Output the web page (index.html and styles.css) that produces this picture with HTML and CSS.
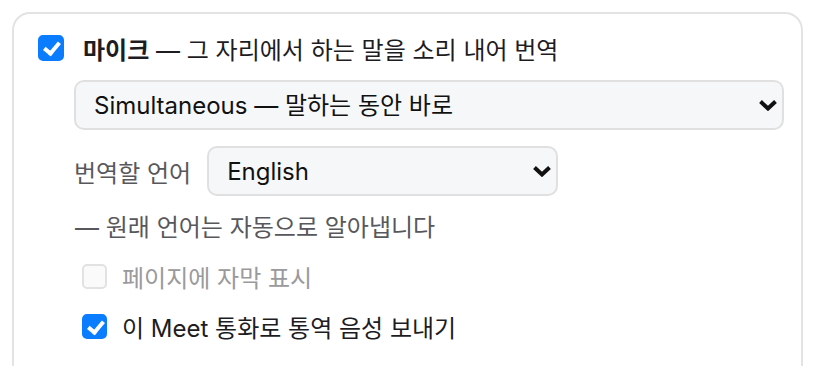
FILE: index.html
```html
<!DOCTYPE html>
<html lang="ko">
<head>
<meta charset="utf-8">
<link rel="stylesheet" href="styles.css">
</head>
<body>
<section class="card">
  <label class="row-main">
    <input type="checkbox" class="check" checked>
    <span class="main-text"><b>마이크</b> — 그 자리에서 하는 말을 소리 내어 번역</span>
  </label>
  <div class="sub">
    <div class="select-wrap select-mode">
      <select class="select">
        <option>Simultaneous — 말하는 동안 바로</option>
      </select>
      <svg class="chev" width="20" height="12" viewBox="0 0 20 12"><path d="M2.5 2.5 L10 9.5 L17.5 2.5" fill="none" stroke="#111" stroke-width="4" stroke-linejoin="miter"/></svg>
    </div>
    <div class="lang-row">
      <span class="muted">번역할 언어</span>
      <div class="select-wrap select-lang">
        <select class="select">
          <option>English</option>
        </select>
        <svg class="chev" width="20" height="12" viewBox="0 0 20 12"><path d="M2.5 2.5 L10 9.5 L17.5 2.5" fill="none" stroke="#111" stroke-width="4" stroke-linejoin="miter"/></svg>
      </div>
    </div>
    <p class="muted hint">— 원래 언어는 자동으로 알아냅니다</p>
    <label class="row-opt disabled">
      <input type="checkbox" class="check small" disabled>
      <span>페이지에 자막 표시</span>
    </label>
    <label class="row-opt second">
      <input type="checkbox" class="check small" checked>
      <span>이 Meet 통화로 통역 음성 보내기</span>
    </label>
  </div>
</section>
</body>
</html>
```
FILE: styles.css
```css
html, body {
  margin: 0;
  padding: 0;
  background: #ffffff;
}
body {
  font-family: Inter, "Noto Sans CJK KR", sans-serif;
  font-size: 24px;
  color: #1d1d1f;
  overflow: hidden;
}
.card {
  box-sizing: border-box;
  margin: 12px 0 0 12px;
  width: 791px;
  min-height: 420px;
  border: 2px solid #e3e3e3;
  border-radius: 18px;
  padding: 20px 17px 0 24px;
}
.row-main {
  display: flex;
  align-items: center;
  height: 28px;
  gap: 19px;
}
.main-text b {
  font-weight: 700;
}
.check {
  appearance: none;
  -webkit-appearance: none;
  margin: 0;
  flex: none;
  width: 26px;
  height: 26px;
  border-radius: 5px;
  border: 2px solid #e2e2e2;
  background: #fafafa;
  position: relative;
  box-sizing: border-box;
}
.check:checked {
  background: #0a7cff;
  border-color: #0a7cff;
}
.check:checked::after {
  content: "";
  position: absolute;
  left: 7px;
  top: 2px;
  width: 6px;
  height: 12px;
  border-right: 4px solid #fff;
  border-bottom: 4px solid #fff;
  transform: rotate(40deg);
}
.check.small {
  width: 25px;
  height: 25px;
}
.sub {
  margin-left: 36px;
  display: flex;
  flex-direction: column;
}
.select-wrap {
  position: relative;
  box-sizing: border-box;
  height: 50px;
}
.select {
  appearance: none;
  -webkit-appearance: none;
  box-sizing: border-box;
  width: 100%;
  height: 50px;
  margin: 0;
  border: 2px solid #e0e0e0;
  border-radius: 10px;
  background: #f6f7f9;
  font-family: inherit;
  font-size: 24px;
  color: #111;
  padding: 0 40px 0 18px;
}
.chev {
  position: absolute;
  right: 6px;
  top: 19px;
  pointer-events: none;
}
.select-mode {
  margin-top: 18px;
}
.lang-row {
  margin-top: 16px;
  display: flex;
  align-items: center;
  gap: 16px;
}
.select-lang {
  width: 351px;
}
.muted {
  color: #58585c;
}
.hint {
  margin: 17px 0 0 1px;
  line-height: 30px;
}
.row-opt {
  display: flex;
  align-items: center;
  height: 30px;
  gap: 15px;
  padding-left: 8px;
}
.row-opt.disabled {
  margin-top: 18px;
  color: #9a9a9c;
}
.row-opt.second {
  margin-top: 20px;
}
```
